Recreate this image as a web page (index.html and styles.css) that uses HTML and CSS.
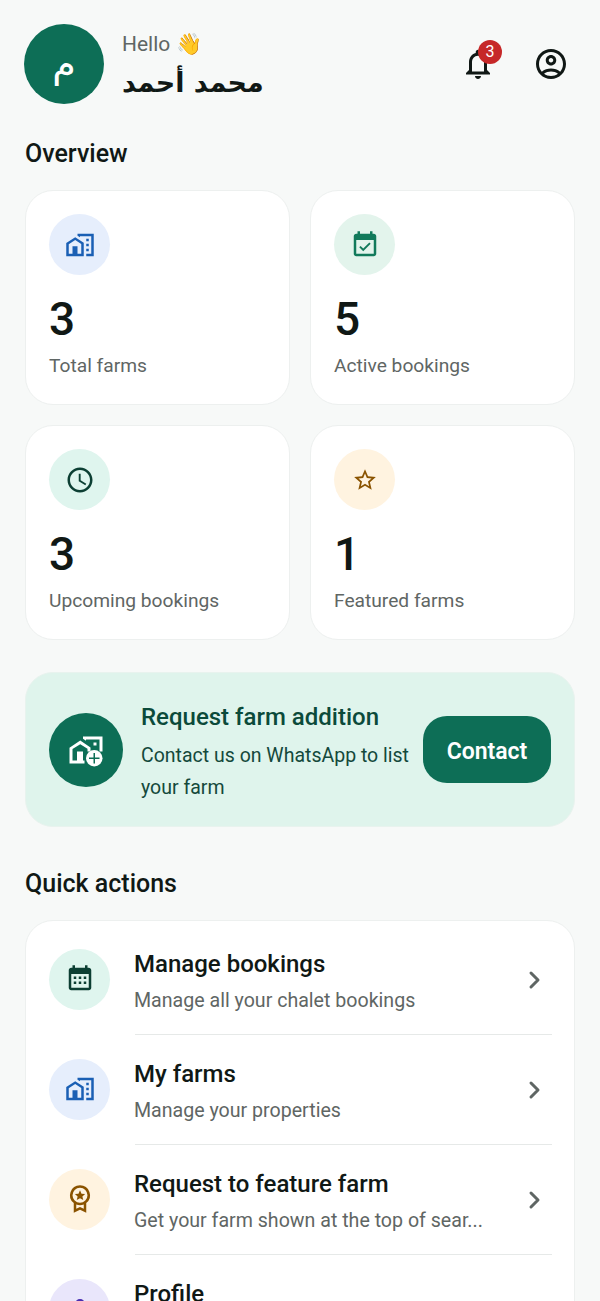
FILE: index.html
```html
<!DOCTYPE html>
<html lang="en">
<head>
<meta charset="utf-8">
<title>Owner dashboard</title>
<link rel="stylesheet" href="styles.css">
</head>
<body>
<div class="page">
  <header class="header">
    <div class="avatar" dir="rtl">م</div>
    <div class="greeting">
      <div class="hello">Hello 👋</div>
      <div class="name" dir="rtl">محمد أحمد</div>
    </div>
    <div class="header-actions">
      <div class="bell">
        <svg class="hicon" viewBox="0 0 24 24"><path d="M12 22c1.100 0 2-.9 2-2h-4c0 1.100.89 2 2 2zm6-6v-5c0-3.070-1.640-5.640-4.500-6.320V4c0-.83-.67-1.500-1.500-1.500s-1.500.67-1.500 1.500v.68C7.630 5.360 6 7.920 6 11v5l-2 2v1h16v-1l-2-2zm-2 1H8v-6c0-2.480 1.510-4.500 4-4.500s4 2.020 4 4.500v6z"/></svg>
        <span class="badge">3</span>
      </div>
      <svg class="hicon" viewBox="0 0 24 24"><path fill-rule="evenodd" d="M12 2C6.480 2 2 6.480 2 12s4.480 10 10 10 10-4.480 10-10S17.520 2 12 2zM7.350 18.500C8.660 17.560 10.260 17 12 17s3.340.56 4.650 1.500c-1.310.94-2.910 1.500-4.650 1.500s-3.340-.56-4.650-1.500zm10.790-1.380C16.450 15.800 14.320 15 12 15s-4.450.8-6.140 2.120C4.700 15.730 4 13.950 4 12c0-4.420 3.580-8 8-8s8 3.580 8 8c0 1.950-.7 3.730-1.860 5.120zM12 6c-1.930 0-3.500 1.570-3.500 3.500S10.070 13 12 13s3.500-1.570 3.500-3.500S13.930 6 12 6zm0 5c-.83 0-1.500-.67-1.500-1.500S11.170 8 12 8s1.500.67 1.500 1.500S12.830 11 12 11z"/></svg>
    </div>
  </header>

  <h2 class="section-title">Overview</h2>
  <section class="stats">
    <div class="card">
      <div class="circle blue"><svg class="icon" viewBox="0 0 24 24"><path d="M17 15h2v2h-2zM17 11h2v2h-2zM17 7h2v2h-2zM10 3v1.510l2 1.330V5h9v14h-4v2h6V3z"/><path fill-rule="evenodd" d="M8.170 5.700L15 10.250V21H1V10.480L8.170 5.700zM10 19h3v-7.840L8.170 8.090 3 11.380V19h3v-6h4v6z"/></svg></div>
      <div class="num">3</div>
      <div class="label">Total farms</div>
    </div>
    <div class="card">
      <div class="circle green"><svg class="icon" viewBox="0 0 24 24"><path fill-rule="evenodd" d="M16.530 11.060L15.470 10l-4.880 4.880-2.120-2.120-1.060 1.060L10.590 17l5.940-5.940zM19 3h-1V1h-2v2H8V1H6v2H5c-1.110 0-1.990.9-1.990 2L3 19c0 1.100.89 2 2 2h14c1.100 0 2-.9 2-2V5c0-1.100-.9-2-2-2zm0 16H5V8h14v11z"/></svg></div>
      <div class="num">5</div>
      <div class="label">Active bookings</div>
    </div>
    <div class="card">
      <div class="circle mint"><svg class="icon" viewBox="0 0 24 24"><path fill-rule="evenodd" d="M11.990 2C6.470 2 2 6.480 2 12s4.470 10 9.990 10C17.520 22 22 17.520 22 12S17.520 2 11.990 2zM12 20c-4.420 0-8-3.580-8-8s3.580-8 8-8 8 3.580 8 8-3.580 8-8 8z"/><path d="M12.500 7H11v6l5.250 3.150.75-1.230-4.500-2.670z"/></svg></div>
      <div class="num">3</div>
      <div class="label">Upcoming bookings</div>
    </div>
    <div class="card">
      <div class="circle amber"><svg class="icon star" viewBox="0 0 24 24"><path fill-rule="evenodd" d="M22 9.240l-7.190-.62L12 2 9.190 8.630 2 9.240l5.460 4.730L5.820 21 12 17.270 18.180 21l-1.630-7.030L22 9.240zM12 15.400l-3.760 2.270 1-4.280-3.320-2.880 4.380-.38L12 6.100l1.710 4.040 4.380.38-3.320 2.880 1 4.280L12 15.400z"/></svg></div>
      <div class="num">1</div>
      <div class="label">Featured farms</div>
    </div>
  </section>

  <section class="banner">
    <div class="banner-icon">
      <svg class="icon-lg" viewBox="0 0 24 24"><path d="M10 3v1.500l2 1.300V5h9v8h2V3z"/><path d="M17 7h2v2h-2z"/><path fill-rule="evenodd" d="M8.170 5.700L15 10.250V13h-2v-1.840L8.170 8.090 3 11.380V19h3v-6h4v6h1v2H1V10.480z"/><circle cx="17.500" cy="17.500" r="5.500"/><path class="plus" d="M17 14h1v3h3v1h-3v3h-1v-3h-3v-1h3z"/></svg>
    </div>
    <div class="banner-text">
      <div class="banner-title">Request farm addition</div>
      <div class="banner-sub">Contact us on WhatsApp to list your farm</div>
    </div>
    <button class="contact">Contact</button>
  </section>

  <h2 class="section-title quick">Quick actions</h2>
  <section class="list">
    <div class="row">
      <div class="circle mint"><svg class="icon" viewBox="0 0 24 24"><path fill-rule="evenodd" d="M19 3h-1V1h-2v2H8V1H6v2H5c-1.100 0-2 .9-2 2v14c0 1.100.9 2 2 2h14c1.100 0 2-.9 2-2V5c0-1.100-.9-2-2-2zm0 16H5V8h14v11z"/><path d="M7 10h2v2H7zM11 10h2v2h-2zM15 10h2v2h-2zM7 14h2v2H7zM11 14h2v2h-2zM15 14h2v2h-2z"/></svg></div>
      <div class="row-body">
        <div class="row-text"><div class="row-title">Manage bookings</div><div class="row-sub">Manage all your chalet bookings</div></div>
        <svg class="chev" viewBox="0 0 24 24"><path d="M9 5l7 7-7 7"/></svg>
      </div>
    </div>
    <div class="row">
      <div class="circle blue"><svg class="icon" viewBox="0 0 24 24"><path d="M17 15h2v2h-2zM17 11h2v2h-2zM17 7h2v2h-2zM10 3v1.510l2 1.330V5h9v14h-4v2h6V3z"/><path fill-rule="evenodd" d="M8.170 5.700L15 10.250V21H1V10.480L8.170 5.700zM10 19h3v-7.840L8.170 8.090 3 11.380V19h3v-6h4v6z"/></svg></div>
      <div class="row-body">
        <div class="row-text"><div class="row-title">My farms</div><div class="row-sub">Manage your properties</div></div>
        <svg class="chev" viewBox="0 0 24 24"><path d="M9 5l7 7-7 7"/></svg>
      </div>
    </div>
    <div class="row">
      <div class="circle amber"><svg class="icon" viewBox="0 0 24 24"><path fill-rule="evenodd" d="M12 1a8 8 0 0 0-5 14.240V23l5-2.500 5 2.500v-7.760A8 8 0 0 0 12 1zm0 2a6 6 0 1 1 0 12 6 6 0 0 1 0-12zm-3 13.400a8 8 0 0 0 6 0v3.400l-3-1.500-3 1.500z"/><path d="M12 5l1.200 2.700 2.900.3-2.200 1.900.7 2.900L12 11.300 9.400 12.800l.7-2.900L7.900 8l2.900-.3z"/></svg></div>
      <div class="row-body">
        <div class="row-text"><div class="row-title">Request to feature farm</div><div class="row-sub">Get your farm shown at the top of sear...</div></div>
        <svg class="chev" viewBox="0 0 24 24"><path d="M9 5l7 7-7 7"/></svg>
      </div>
    </div>
    <div class="row">
      <div class="circle lavender"><svg class="icon" viewBox="0 0 24 24"><path fill-rule="evenodd" d="M12 4a4 4 0 1 0 0 8 4 4 0 0 0 0-8zm0 2a2 2 0 1 1 0 4 2 2 0 0 1 0-4zM12 13c-2.670 0-8 1.340-8 4v3h16v-3c0-2.660-5.330-4-8-4zm-6 5v-1c.2-.7 3.300-2 6-2s5.800 1.300 6 2v1z"/></svg></div>
      <div class="row-body">
        <div class="row-text row-text-single"><div class="row-title">Profile</div></div>
        <svg class="chev" viewBox="0 0 24 24"><path d="M9 5l7 7-7 7"/></svg>
      </div>
    </div>
  </section>
</div>
</body>
</html>
```
FILE: styles.css
```css
* { box-sizing: border-box; }
html, body { margin: 0; height: 100%; overflow: hidden; }
body {
  background: #f7f9f8;
  color: #101815;
  font-family: Roboto, "DejaVu Sans", sans-serif;
}
.page { padding: 24px 25px; }
.header { display: flex; align-items: center; height: 80px; margin-left: -1px; }
.avatar {
  width: 80px; height: 80px; border-radius: 50%;
  background: #0d6e56; color: #fff;
  display: flex; align-items: center; justify-content: center;
  font-size: 38px; font-weight: 400;
  font-family: "DejaVu Sans", sans-serif;
  flex: none;
}
.greeting { margin-left: 18px; flex: 1; display: flex; flex-direction: column; align-items: flex-start; margin-top: 4px; }
.hello { font-size: 21px; line-height: 30px; color: #5f6664; }
.name { font-size: 27px; line-height: 40px; font-weight: 700; font-family: "DejaVu Sans", sans-serif; margin-top: 4px; }
.header-actions { display: flex; align-items: center; gap: 37px; margin-right: 6px; }
.bell { position: relative; display: flex; }
.hicon { width: 36px; height: 36px; fill: #101815; display: block; }
.badge {
  position: absolute; top: -6px; right: -6px;
  width: 24px; height: 24px; border-radius: 50%;
  background: #c62828; color: #fff;
  font-size: 16px; line-height: 24px; text-align: center;
}
.section-title { margin: 0; font-size: 25px; line-height: 36px; font-weight: 500; }
.header + .section-title { margin-top: 32px; margin-bottom: 18px; }
.quick { margin-top: 39px; margin-bottom: 18px; }
.stats { display: grid; grid-template-columns: 1fr 1fr; gap: 20px; }
.card {
  height: 215px; padding: 23px;
  background: #fff; border: 1px solid #edf0ef; border-radius: 28px;
}
.circle {
  width: 61px; height: 61px; border-radius: 50%;
  display: flex; align-items: center; justify-content: center; flex: none;
}
.icon { width: 30px; height: 30px; display: block; fill: currentColor; }
.star { width: 26px; height: 26px; }
.blue { background: #e6eefc; color: #1a5fb4; }
.green { background: #e3f4ec; color: #127a5b; }
.mint { background: #dff5ee; color: #0c3f33; }
.amber { background: #fff3e0; color: #8a5300; }
.lavender { background: #e9e6fb; color: #4a2fb0; }
.num { margin-top: 16px; font-size: 46px; line-height: 56px; font-weight: 500; }
.label { font-size: 19.2px; line-height: 34px; color: #5f6664; margin-top: 2px; }
.banner {
  margin-top: 32px; height: 155px; padding: 0 23px;
  display: flex; align-items: center;
  background: #dff4ec; border: 1px solid #e8f3ee; border-radius: 28px;
}
.banner-icon {
  width: 74px; height: 74px; border-radius: 50%; background: #0d6e56;
  display: flex; align-items: center; justify-content: center; flex: none;
}
.icon-lg { width: 36px; height: 36px; fill: #fff; display: block; }
.plus { fill: #0d6e56; }
.banner-text { margin-left: 18px; flex: 1; min-width: 0; }
.banner-title { font-size: 24px; line-height: 36px; font-weight: 500; color: #0b4a3a; margin-top: 4px; margin-bottom: 5px; }
.banner-sub { font-size: 19.5px; line-height: 32px; color: #14493b; }
.contact {
  width: 128px; height: 67px; flex: none; border: 0; border-radius: 24px; padding: 3px 0 0;
  background: #0d6e56; color: #fff;
  font: 600 23px Roboto, sans-serif;
}
.list { background: #fff; border: 1px solid #edf0ef; border-radius: 28px; padding: 4px 22px 0 23px; }
.row { display: flex; align-items: center; height: 110px; }
.row > .circle { margin-bottom: 2px; }
.row-body {
  flex: 1; align-self: stretch; margin-left: 25px;
  display: flex; align-items: center; justify-content: space-between;
  border-bottom: 1px solid #e6e9e8;
}
.row-text { padding-top: 4px; margin-left: -1px; }
.row-text-single { padding-bottom: 35px; }
.row-title { font-size: 24px; line-height: 36px; font-weight: 500; }
.row-sub { font-size: 19.6px; line-height: 32px; color: #5f6664; margin-top: 3px; }
.chev { width: 24px; height: 24px; fill: none; stroke: #5f6664; stroke-width: 3; stroke-linecap: round; stroke-linejoin: round; margin-right: 6px; flex: none; }
```
